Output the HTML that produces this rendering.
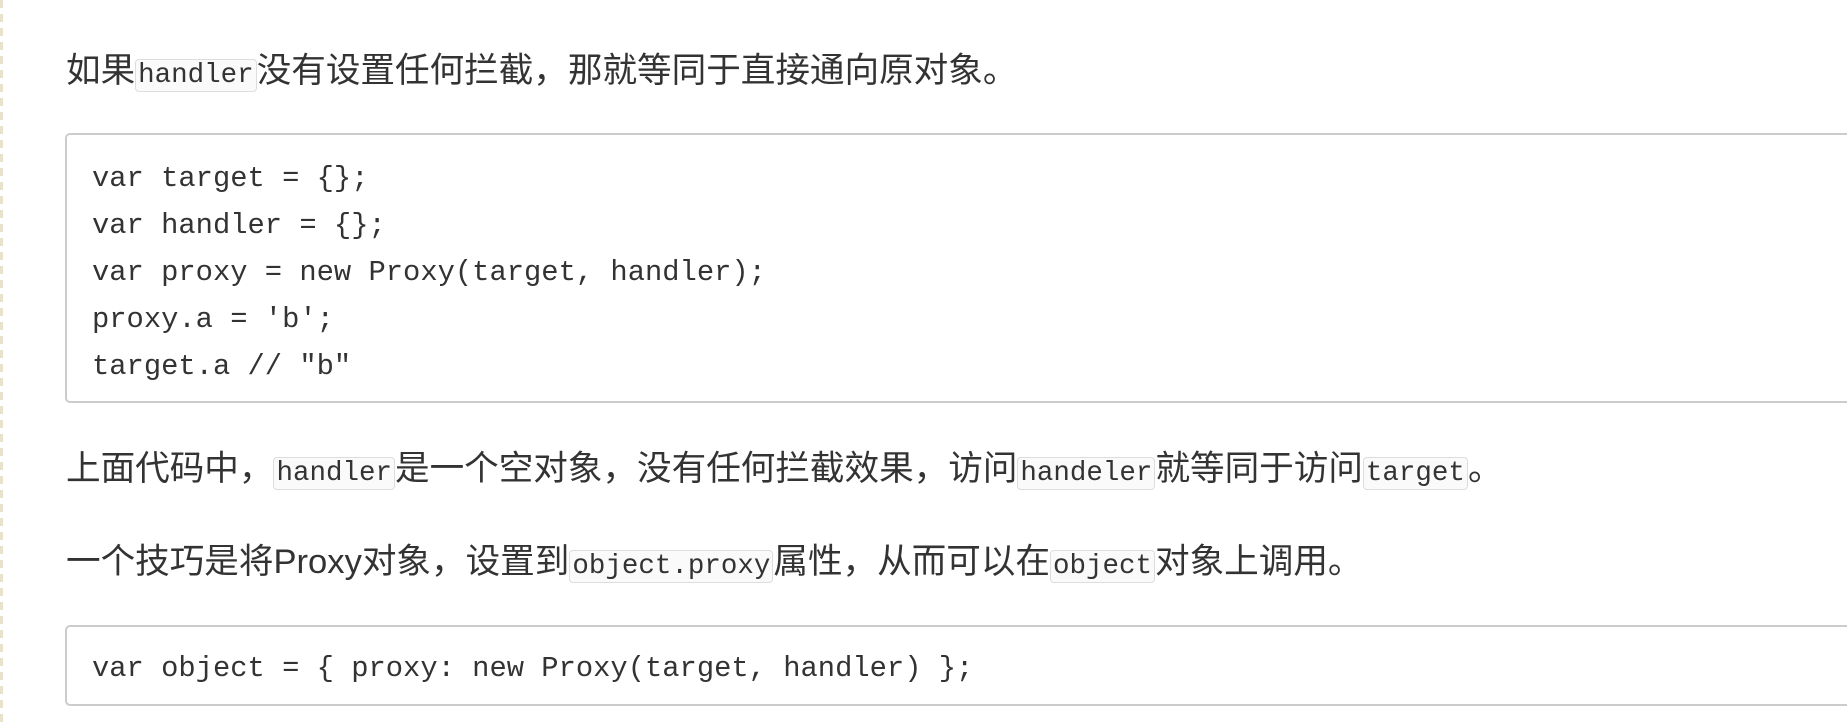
<!DOCTYPE html>
<html><head><meta charset="utf-8"><style>
body{margin:0;width:1847px;height:724px;background:#fff;position:relative;overflow:hidden;font-family:"Liberation Sans","Noto Sans CJK SC",sans-serif;color:#333}
.p{position:absolute;left:66px;font-size:34.6px;line-height:40px;white-space:nowrap}
code{font-family:"Liberation Mono",monospace;font-size:27.5px;border:1px solid #ddd;border-radius:4px;padding:0 2px;background:#fafafa}
.pre{position:absolute;left:65px;width:1900px;border:2px solid #ccc;border-radius:5px;background:#fff;box-sizing:border-box}
.pre div{position:absolute;left:25px;font-family:"Liberation Mono",monospace;font-size:28.8px;line-height:40px;white-space:pre;color:#333}
.edge{position:absolute;left:0;top:0;width:3px;height:724px;background:repeating-linear-gradient(#e8e2cc 0 8px,#fff 8px 14px)}
</style></head><body>
<div class="edge"></div>
<div class="p" style="top:51px">如果<code>handler</code>没有设置任何拦截，那就等同于直接通向原对象。</div>
<div class="pre" style="top:133px;height:270px">
<div style="top:24px">var target = {};</div>
<div style="top:71px">var handler = {};</div>
<div style="top:118px">var proxy = new Proxy(target, handler);</div>
<div style="top:165px">proxy.a = 'b';</div>
<div style="top:212px">target.a // "b"</div>
</div>
<div class="p" style="top:449px">上面代码中，<code>handler</code>是一个空对象，没有任何拦截效果，访问<code>handeler</code>就等同于访问<code>target</code>。</div>
<div class="p" style="top:542px">一个技巧是将Proxy对象，设置到<code>object.proxy</code>属性，从而可以在<code>object</code>对象上调用。</div>
<div class="pre" style="top:625px;height:81px">
<div style="top:22px">var object = { proxy: new Proxy(target, handler) };</div>
</div>
</body></html>
